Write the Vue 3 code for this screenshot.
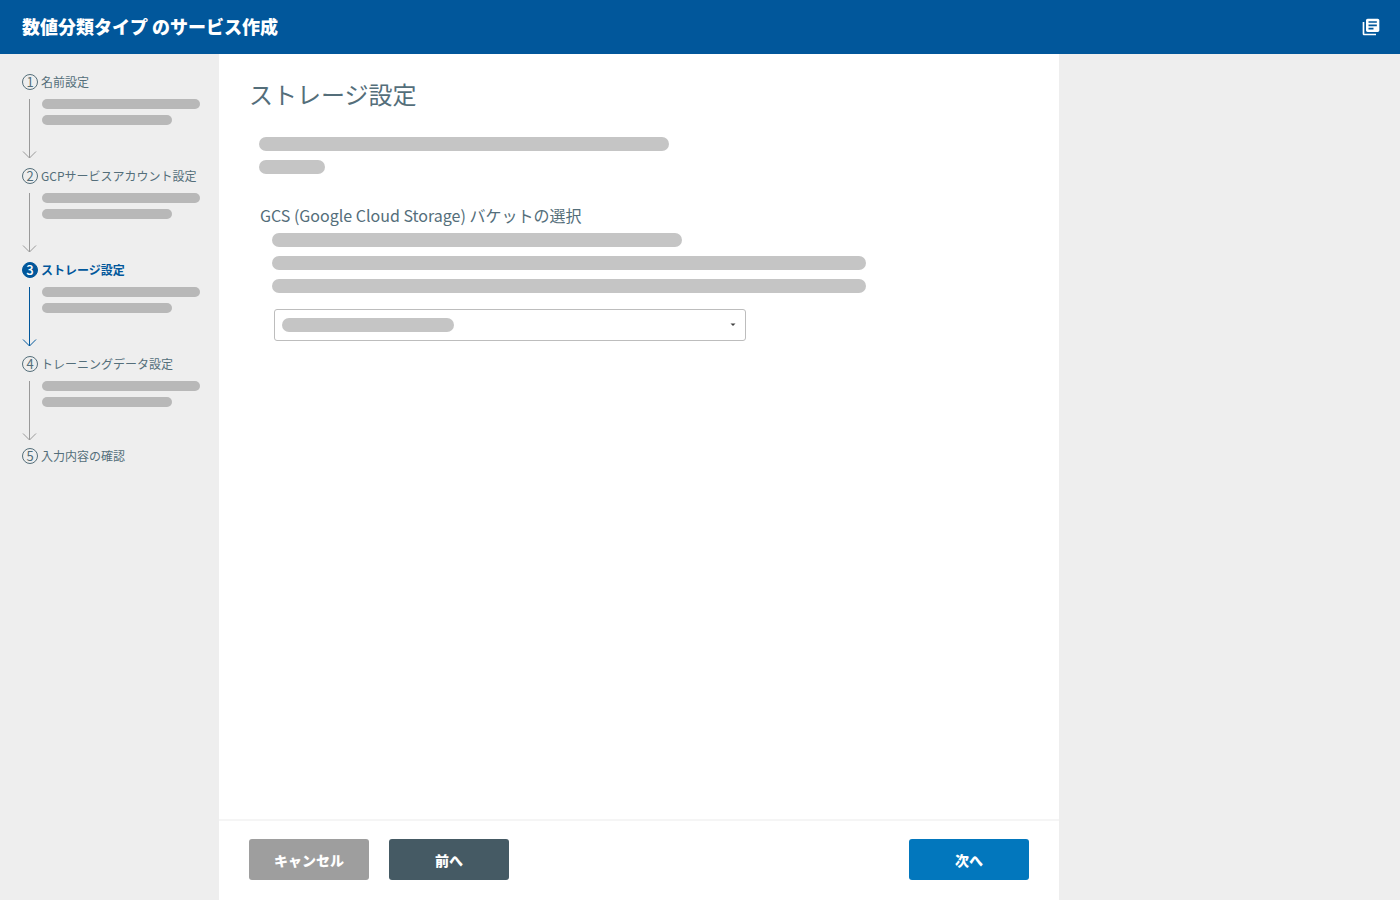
<script setup>
const steps = [
  { no: 1, label: '名前設定' },
  { no: 2, label: 'GCPサービスアカウント設定' },
  { no: 3, label: 'ストレージ設定', active: true },
  { no: 4, label: 'トレーニングデータ設定' },
  { no: 5, label: '入力内容の確認', last: true },
]
</script>

<template>
  <div class="page">
    <header class="header">
      <h1>数値分類タイプ のサービス作成</h1>
      <button class="docs" type="button" aria-label="ドキュメント">
        <svg viewBox="0 0 24 24" width="20" height="20" fill="currentColor" aria-hidden="true">
          <path d="M4 6H2v14c0 1.1.9 2 2 2h14v-2H4V6zm16-4H8c-1.1 0-2 .9-2 2v12c0 1.1.9 2 2 2h12c1.1 0 2-.9 2-2V4c0-1.1-.9-2-2-2zm-1 9H9V9h10v2zm-4 4H9v-2h6v2zm4-8H9V5h10v2z" />
        </svg>
      </button>
    </header>
    <div class="body">
      <nav class="sidebar">
        <ol class="steps">
          <li v-for="s in steps" :key="s.no" class="step" :class="{ active: s.active }">
            <div class="step-head">
              <span class="num">{{ s.no }}</span>
              <span class="label">{{ s.label }}</span>
            </div>
            <div v-if="!s.last" class="step-body">
              <svg class="arrow" width="16" height="60" viewBox="0 0 16 60" fill="none" stroke="currentColor" aria-hidden="true">
                <path d="M7.5 0V59" />
                <path d="M1 52.500L7.500 59L14 52.500" />
              </svg>
              <div class="step-lines">
                <span class="bar small wide"></span>
                <span class="bar small"></span>
              </div>
            </div>
          </li>
        </ol>
      </nav>
      <main class="main">
        <div class="content">
          <h2>ストレージ設定</h2>
          <div class="lines intro">
            <span class="bar medium"></span>
            <span class="bar short"></span>
          </div>
          <section class="bucket">
            <h3><label for="bucket">GCS (Google Cloud Storage) バケットの選択</label></h3>
            <div class="lines">
              <span class="bar medium"></span>
              <span class="bar long"></span>
              <span class="bar long"></span>
            </div>
            <div class="select-wrap">
              <select id="bucket"><option></option></select>
              <span class="bar value"></span>
              <svg class="caret" width="6" height="4" viewBox="0 0 6 4" aria-hidden="true"><path d="M0.500 0.500h5L3 3z" fill="#424242" /></svg>
            </div>
          </section>
        </div>
        <footer class="footer">
          <button type="button" class="btn cancel">キャンセル</button>
          <button type="button" class="btn prev">前へ</button>
          <button type="button" class="btn next">次へ</button>
        </footer>
      </main>
    </div>
  </div>
</template>

<style>
body {
  margin: 0;
  background: #eee;
}
</style>

<style scoped>
.page {
  min-height: 100vh;
  display: flex;
  flex-direction: column;
  font-family: "Noto Sans CJK JP", sans-serif;
  color: #546e7a;
  background: #eee;
}
.header {
  height: 54px;
  padding: 0 19px 0 22px;
  display: flex;
  align-items: center;
  justify-content: space-between;
  background: #01579b;
  color: #fff;
}
h1, h2, h3 {
  margin: 0;
}
h1 {
  padding-bottom: 2px;
  font-size: 18px;
  line-height: 26px;
  font-weight: 900;
}
.docs {
  display: flex;
  padding: 0;
  border: 0;
  background: none;
  color: inherit;
}
.body {
  flex: 1;
  display: flex;
}
.sidebar {
  flex: 0 0 219px;
}
.steps {
  list-style: none;
  margin: 0;
  padding: 19px 0 0 22px;
}
.step-head {
  display: flex;
  align-items: center;
  gap: 3px;
  height: 18px;
  font-size: 12px;
  line-height: 18px;
}
.num {
  box-sizing: border-box;
  width: 16px;
  height: 16px;
  border: 1px solid #546e7a;
  border-radius: 50%;
  font-size: 13px;
  line-height: 14px;
  text-align: center;
}
.label {
  white-space: nowrap;
}
.step-body {
  display: flex;
  gap: 4px;
  height: 68px;
  padding-top: 8px;
}
.step:nth-child(4) .step-body {
  height: 66px;
}
.arrow {
  flex: none;
  color: #999;
}
.active .arrow {
  color: #01579b;
}
.active .step-head {
  color: #01579b;
  font-weight: 700;
}
.active .num {
  border-color: #01579b;
  background: #01579b;
  color: #fff;
  font-weight: 500;
}
.step-lines {
  display: flex;
  flex-direction: column;
  gap: 6px;
}
.bar {
  display: block;
  height: 14px;
  border-radius: 7px;
  background: #c5c5c5;
}
.bar.small {
  width: 130px;
  height: 10px;
  border-radius: 5px;
  background: #b8b8b8;
}
.bar.wide {
  width: 158px;
}
.bar.medium {
  width: 410px;
}
.bar.short {
  width: 66px;
}
.bar.long {
  width: 594px;
}
.main {
  flex: 0 1 840px;
  display: flex;
  flex-direction: column;
  background: #fff;
}
.content {
  flex: 1;
  padding: 22px 30px;
}
h2 {
  font-size: 24px;
  line-height: 36px;
  font-weight: 400;
}
.lines {
  display: flex;
  flex-direction: column;
  gap: 9px;
}
.intro {
  padding: 25px 0 0 10px;
}
.bucket {
  padding: 29px 0 0 11px;
}
h3 {
  font-size: 16px;
  line-height: 24px;
  font-weight: 400;
}
.bucket .lines {
  padding: 6px 0 0 12px;
}
.select-wrap {
  position: relative;
  width: 472px;
  margin: 16px 0 0 14px;
}
select {
  appearance: none;
  display: block;
  box-sizing: border-box;
  width: 100%;
  height: 32px;
  border: 1px solid #bdbdbd;
  border-radius: 3px;
  background: #fff;
}
.value {
  position: absolute;
  left: 8px;
  top: 9px;
  width: 172px;
  pointer-events: none;
}
.caret {
  position: absolute;
  right: 10px;
  top: 14px;
  pointer-events: none;
}
.footer {
  display: flex;
  gap: 20px;
  padding: 18px 30px 20px;
  border-top: 2px solid #f5f5f5;
}
.btn {
  width: 120px;
  height: 41px;
  padding: 0;
  border: 0;
  border-radius: 3px;
  color: #fff;
  font-family: inherit;
  font-size: 14px;
  font-weight: 900;
}
.cancel {
  background: #9e9e9e;
}
.prev {
  background: #455a64;
}
.next {
  margin-left: auto;
  background: #0277bd;
}
</style>
